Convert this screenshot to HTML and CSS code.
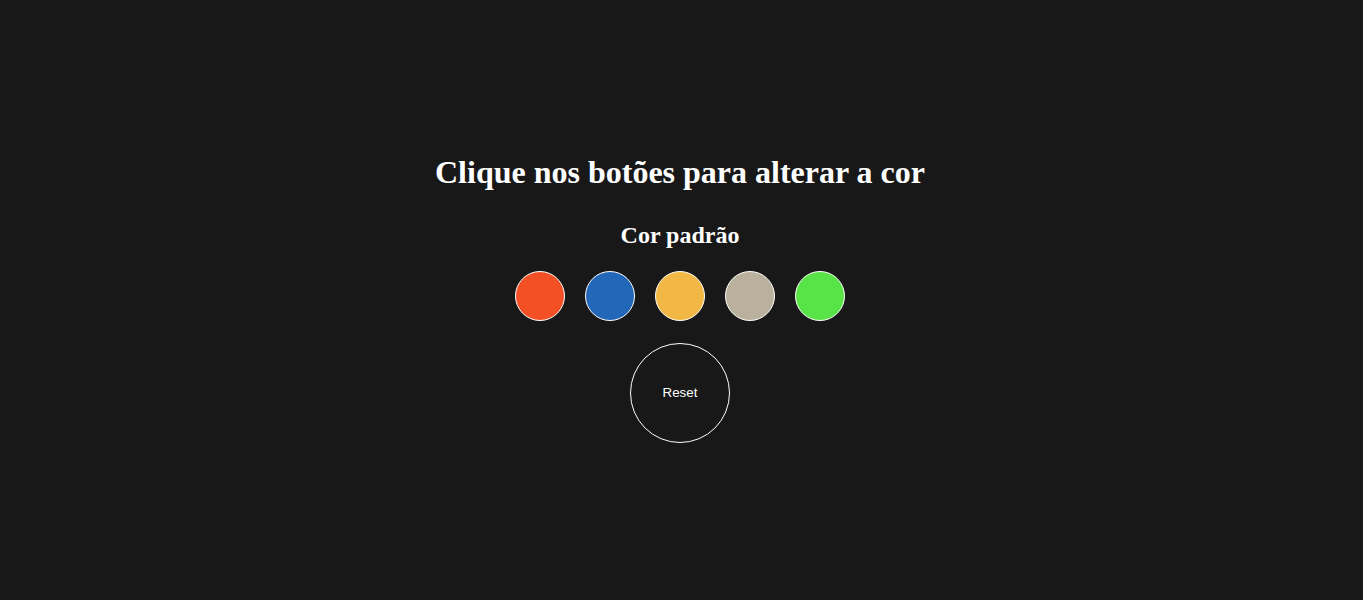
FILE: index.html
```html
<!DOCTYPE html>
<html lang="pt-BR">
<head>
<meta charset="utf-8">
<title>Cores</title>
<link rel="stylesheet" href="styles.css">
</head>
<body>
<main class="page">
  <h1 class="title">Clique nos botões para alterar a cor</h1>
  <h2 class="subtitle">Cor padrão</h2>
  <div class="swatches">
    <button class="swatch swatch-red" aria-label="Vermelho"></button>
    <button class="swatch swatch-blue" aria-label="Azul"></button>
    <button class="swatch swatch-yellow" aria-label="Amarelo"></button>
    <button class="swatch swatch-grey" aria-label="Cinza"></button>
    <button class="swatch swatch-green" aria-label="Verde"></button>
  </div>
  <button class="reset">Reset</button>
</main>
</body>
</html>
```
FILE: styles.css
```css
html, body {
  margin: 0;
  padding: 0;
  background: #181818;
}
.page {
  box-sizing: border-box;
  height: 100vh;
  padding: 0 3px 4px 0;
  display: flex;
  flex-direction: column;
  align-items: center;
  justify-content: center;
  color: #ffffff;
  font-family: "Liberation Serif", "Times New Roman", serif;
}
.title {
  font-size: 32px;
  font-weight: bold;
  margin: 0 0 31px;
}
.subtitle {
  font-size: 24px;
  font-weight: bold;
  margin: 0 0 22px;
}
.swatches {
  display: flex;
  gap: 20px;
  margin-bottom: 22px;
}
.swatch {
  width: 50px;
  height: 50px;
  border-radius: 50%;
  border: 1px solid #ffffff;
  padding: 0;
  cursor: pointer;
}
.swatch-red { background: #f35026; }
.swatch-blue { background: #2368b8; }
.swatch-yellow { background: #f3b746; }
.swatch-grey { background: #b9b09e; }
.swatch-green { background: #58e346; }
.reset {
  width: 100px;
  height: 100px;
  border-radius: 50%;
  border: 1px solid #ffffff;
  background: transparent;
  color: #ffffff;
  font-family: "Liberation Sans", Arial, sans-serif;
  font-size: 13.33px;
  padding: 0;
  cursor: pointer;
}
```
